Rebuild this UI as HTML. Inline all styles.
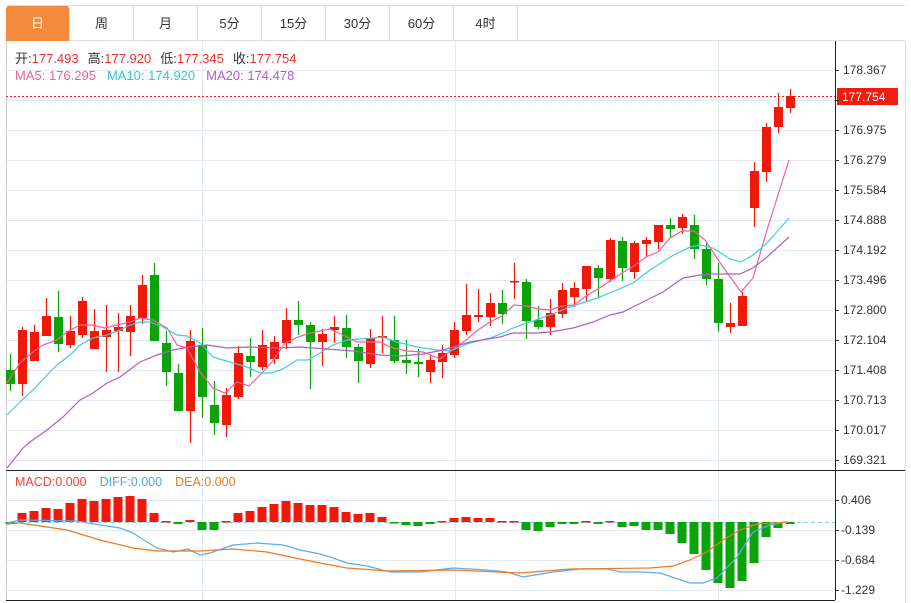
<!DOCTYPE html>
<html><head><meta charset="utf-8">
<style>
html,body{margin:0;padding:0;background:#fff;width:911px;height:603px;overflow:hidden;font-family:"Liberation Sans","Noto Sans CJK SC",sans-serif;}
.tabs{position:absolute;left:6px;top:5px;height:36px;width:899px;border-top:1px solid #ddd;border-bottom:1px solid #ddd;box-sizing:border-box;}
.tab{position:absolute;top:0;height:35px;width:64px;border-right:1px solid #ddd;box-sizing:border-box;text-align:center;line-height:35px;font-size:13px;color:#333;}
.tab.on{background:#f28c3c;color:#fff;border-radius:3px 3px 0 0;}
svg{position:absolute;left:0;top:0;}
</style></head><body>
<div class="tabs">
<div class="tab on" style="left:0">日</div>
<div class="tab" style="left:64px">周</div>
<div class="tab" style="left:128px">月</div>
<div class="tab" style="left:192px">5分</div>
<div class="tab" style="left:256px">15分</div>
<div class="tab" style="left:320px">30分</div>
<div class="tab" style="left:384px">60分</div>
<div class="tab" style="left:448px">4时</div>
<div class="tab" style="left:512px;width:387px;border-right:none"></div>
</div>
<svg id="s" width="911" height="603" xmlns="http://www.w3.org/2000/svg" font-family="Liberation Sans, Noto Sans CJK SC, sans-serif" font-size="12">
<g id="grid" stroke="#e3eaf1" stroke-width="1"></g>
<line x1="6.5" y1="41" x2="6.5" y2="600" stroke="#ccc"/>
<line x1="905.5" y1="41" x2="905.5" y2="603" stroke="#ddd"/>
<line x1="835.5" y1="41" x2="835.5" y2="600" stroke="#222"/>
<line x1="6" y1="470.5" x2="905" y2="470.5" stroke="#222"/>
<line x1="6" y1="600.5" x2="835" y2="600.5" stroke="#222"/>
<line x1="6" y1="522.5" x2="835" y2="522.5" stroke="#8fd0ea" stroke-dasharray="4,3"/>
<g id="c"></g>
<g id="m"></g>
<line x1="6" y1="96.5" x2="835" y2="96.5" stroke="#f02020" stroke-dasharray="2,2"/>
<rect x="837" y="88" width="61" height="17" fill="#f01c0c"/>
<text x="842" y="101" fill="#fff" font-size="12">177.754</text>
<g id="ax" fill="#333"></g>
<text x="15" y="63" font-size="13"><tspan fill="#333">开:</tspan><tspan fill="#f03030">177.493</tspan><tspan fill="#333" dx="9">高:</tspan><tspan fill="#f03030">177.920</tspan><tspan fill="#333" dx="9">低:</tspan><tspan fill="#f03030">177.345</tspan><tspan fill="#333" dx="9">收:</tspan><tspan fill="#f03030">177.754</tspan></text>
<text x="15" y="80" font-size="13"><tspan fill="#f0609a">MA5: 176.295</tspan><tspan fill="#2ec8e0" dx="11">MA10: 174.920</tspan><tspan fill="#b05cc8" dx="11">MA20: 174.478</tspan></text>
<text x="15" y="486" font-size="12.5"><tspan fill="#f04040">MACD:0.000</tspan><tspan fill="#4aa8f0" dx="13">DIFF:0.000</tspan><tspan fill="#f07820" dx="13">DEA:0.000</tspan></text>
</svg>
<script>
var NS="http://www.w3.org/2000/svg";
function el(p,t,a){var e=document.createElementNS(NS,t);for(var k in a)e.setAttribute(k,a[k]);document.getElementById(p).appendChild(e);return e;}
for(var y=70;y<=460;y+=30)el("grid","line",{x1:7,x2:835,y1:y+.5,y2:y+.5});
[500,530,560,590].forEach(function(y){el("grid","line",{x1:7,x2:835,y1:y+.5,y2:y+.5});});
[202,455,718].forEach(function(x){el("grid","line",{x1:x+.5,x2:x+.5,y1:41,y2:600});});
var labs=["178.367",null,"176.975","176.279","175.584","174.888","174.192","173.496","172.800","172.104","171.408","170.713","170.017","169.321"];
labs.forEach(function(l,i){var y=70+30*i;el("ax","line",{x1:835,x2:839,y1:y+.5,y2:y+.5,stroke:"#333"});if(l){var t=el("ax","text",{x:843,y:y+4});t.textContent=l;}});
[["0.406",500],["-0.139",530],["-0.684",560],["-1.229",590]].forEach(function(a){el("ax","line",{x1:835,x2:839,y1:a[1]+.5,y2:a[1]+.5,stroke:"#333"});var t=el("ax","text",{x:841,y:a[1]+4});t.textContent=a[0];});
var R="#f01808",G="#0aa30a";
var C=[[370,384,354,391,G],[330,384,327,396,R],[332,361,325,361,R],[316,336,298,336,R],[317,344,291,352,G],[331,345,316,348,R],[301,335,297,338,R],[331,349,309,349,R],[330,337,305,372,R],[327,331,313,372,R],[316,332,305,356,R],[285,318,275,324,R],[275,341,263,341,G],[343,372,331,386,G],[373,411,364,411,G],[341,411,330,443,R],[345,397,328,418,G],[405,423,381,435,G],[395,425,388,437,R],[353,397,346,399,R],[356,362,338,377,G],[345,367,330,370,R],[342,359,336,364,R],[320,343,308,349,R],[320,325,301,335,G],[325,342,322,389,G],[334,342,329,366,R],[327,330,316,343,R],[328,347,315,358,G],[347,361,344,383,G],[338,364,329,368,R],[336,338,316,353,R],[340,361,316,363,G],[360,363,340,374,G],[362,364,349,377,G],[360,372,355,383,R],[353,362,345,378,R],[330,355,322,358,R],[315,331,284,335,R],[315,317,289,322,R],[303,317,293,326,R],[303,314,290,324,G],[281,282,263,299,R],[282,321,279,339,G],[320,327,306,329,G],[313,327,299,335,R],[290,314,283,318,R],[288,297,282,307,R],[266,289,266,301,R],[268,278,265,297,G],[240,279,238,282,R],[241,268,237,281,G],[243,272,241,279,R],[240,244,237,257,R],[225,242,225,249,R],[225,229,218,238,G],[217,228,214,234,R],[225,249,215,259,G],[249,279,242,285,G],[279,323,263,332,G],[323,327,303,333,R],[296,326,292,326,R],[171,208,162,227,R],[127,172,123,182,R],[107,127,93,133,R],[96,108,89,113,R]];
C.forEach(function(c,i){var x=10+12*i;el("c","line",{x1:x+.5,x2:x+.5,y1:c[2],y2:c[3],stroke:c[4],"stroke-width":1.2});el("c","rect",{x:x-4,y:c[0],width:9,height:Math.max(1.5,c[1]-c[0]),fill:c[4]});});
function pl(p,pts,col){el(p,"polyline",{points:pts,fill:"none",stroke:col,"stroke-width":1.2});}
pl("c","7,383 20,363 33,352 43,345 57,340 67,332 80,325 92,325 105,328 117,325 130,322 140,318 153,320 167,328 177,345 187,348 200,372 213,388 225,393 237,382 249,386 260,375 272,362 285,343 298,337 310,333 330,329 343,335 357,342 380,342 393,348 407,351 423,352 440,359 452,350 466,340 478,330 490,322 502,316 514,305 526,306 538,309 550,310 562,306 574,305 586,296 598,289 610,281 622,273 634,266 646,257 658,252 670,238 682,231 694,231 705,240 723,267 741,292 753,278 767,230 789,160","#f0609a");
pl("c","7,415 20,402 33,390 47,375 57,365 70,355 80,345 93,338 107,335 120,330 130,325 140,322 150,322 163,327 177,335 187,336 200,343 213,357 223,360 247,367 260,373 272,373 283,369 297,360 308,360 320,353 333,345 347,340 360,339 373,338 383,337 397,342 417,347 437,350 450,351 470,343 490,338 503,333 513,328 550,315 570,307 597,298 617,290 633,283 650,270 670,257 690,247 700,245 713,248 730,259 741,262 753,255 767,243 789,218","#3ccfe0");
pl("c","7,468 23,448 30,442 47,430 63,417 80,400 93,393 107,383 120,377 140,362 157,355 173,350 190,347 207,345 227,348 250,347 277,348 300,347 327,349 353,351 380,355 400,356 423,354 443,350 460,345 470,342 500,337 513,333 537,333 550,332 573,328 593,322 610,315 623,312 643,302 663,292 683,278 700,275 713,274 740,274 753,268 767,257 789,237","#b05cc8");
var M=[524,513,511,508,509,503,499,501,499,497,496,499,513,521,524,520,530,530,521,513,511,507,504,501,503,505,505,507,512,514,513,517,523,525,526,524,521,518,517,518,518,521,521,530,531,527,524,524,521,524,521,527,526,530,530,534,543,554,570,583,588,581,563,537,528,524];
M.forEach(function(v,i){var x=10+12*i;var pos=v<522;var col=pos?R:G;if(i==0)col=G;el("m","rect",{x:x-4.5,y:Math.min(v,522),width:9,height:Math.max(1.5,Math.abs(v-522)),fill:col});});
pl("m","7,523 20,520 77,521 100,525 120,528 133,533 147,542 157,548 173,552 188,549 200,555 210,553 233,545 257,543 283,545 300,550 320,554 330,557 347,563 367,566 390,572 420,572 453,568 487,570 507,572 523,577 553,572 580,569 607,569 620,572 640,572 660,573 690,583 703,583 717,578 737,557 753,532 770,525 787,522","#5aacf0");
pl("m","7,524 20,523 67,530 100,540 133,548 157,551 200,551 233,549 267,552 300,559 320,563 347,568 387,571 453,570 520,573 570,569 650,568 673,566 690,560 707,552 723,540 740,530 757,524 788,522","#f07820");
</script>
</body></html>
